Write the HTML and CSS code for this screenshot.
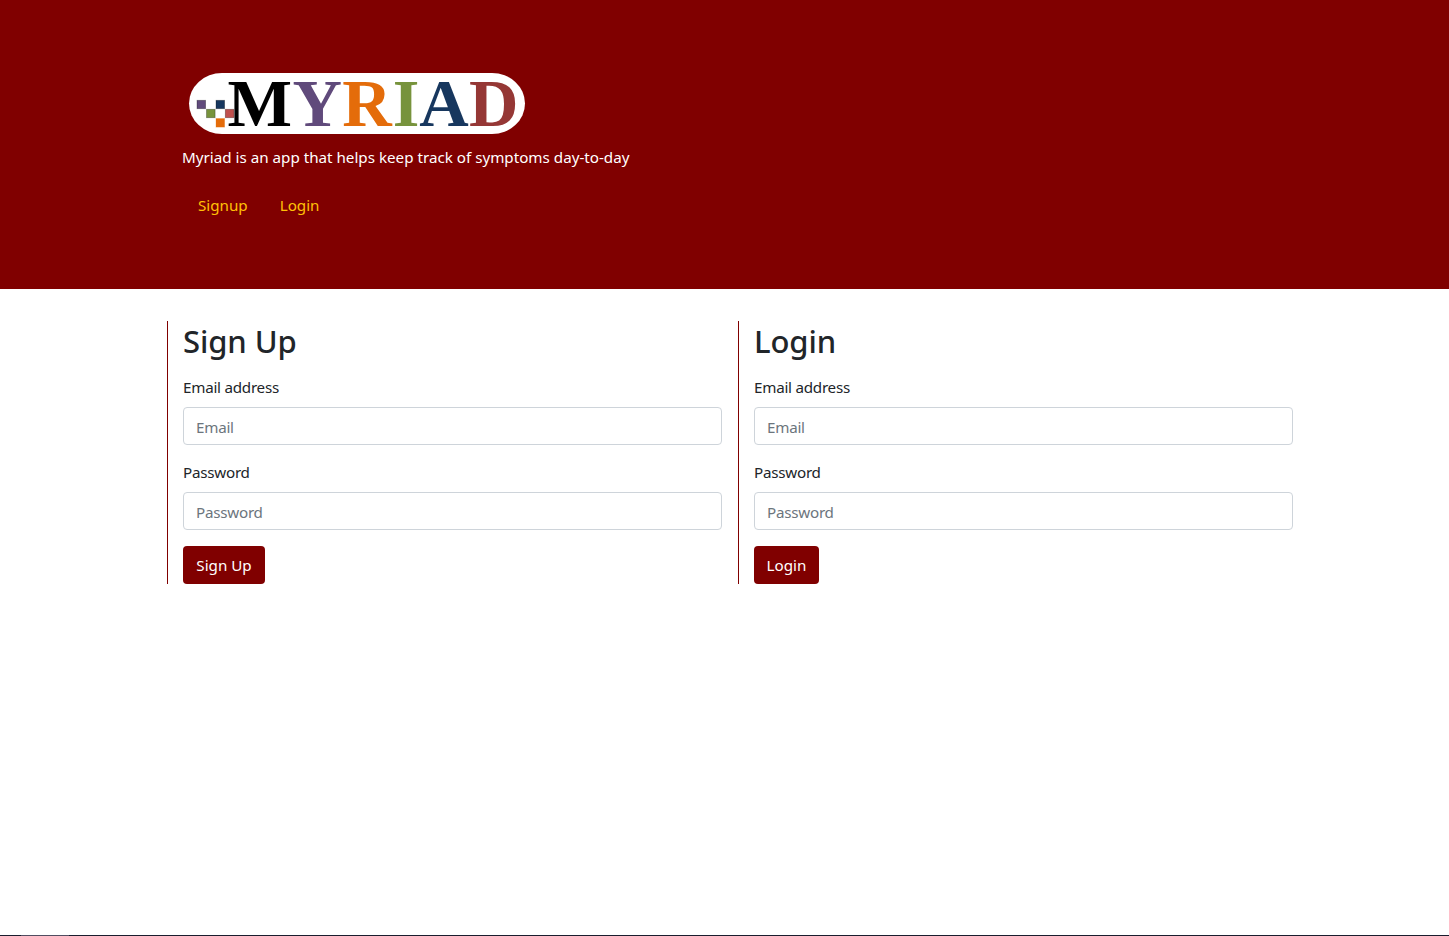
FILE: index.html
```html
<!DOCTYPE html>
<html lang="en">
<head>
<meta charset="utf-8">
<title>Myriad</title>
<link rel="stylesheet" href="styles.css">
</head>
<body>
<header class="hero">
  <svg class="logo" width="336" height="61" viewBox="189 73 336 61" role="img" aria-label="Myriad">
    <rect x="189" y="73" width="336" height="61" rx="33" ry="30.5" fill="#fff"/>
    <g stroke-opacity=".35" stroke="#000" stroke-width=".8">
      <rect x="197" y="100.3" width="8.6" height="8.4" fill="#604a7b"/>
      <rect x="216" y="100.3" width="8.6" height="8.4" fill="#17375e"/>
      <rect x="206.5" y="109.3" width="8.6" height="8.4" fill="#77933c"/>
      <rect x="225.3" y="109.3" width="8.6" height="8.4" fill="#c0504d"/>
      <rect x="216" y="118.5" width="8.6" height="8.6" fill="#e46c0a" stroke="#e46c0a"/>
    </g>
    <g class="logo-text">
      <text x="227.5" y="126" textLength="64.5" lengthAdjust="spacingAndGlyphs" fill="#000">M</text>
      <text x="292.5" y="126" fill="#604a7b">Y</text>
      <text x="342.2" y="126" fill="#e46c0a">R</text>
      <text x="392.7" y="126" fill="#77933c">I</text>
      <text x="419.3" y="126" fill="#17375e">A</text>
      <text x="469" y="126" fill="#953735">D</text>
    </g>
  </svg>
  <p class="tagline">Myriad is an app that helps keep track of symptoms day-to-day</p>
  <nav class="nav"><a>Signup</a><a>Login</a></nav>
</header>
<main class="forms">
  <form class="panel">
    <h2>Sign Up</h2>
    <label>Email address</label>
    <input type="email" placeholder="Email">
    <label>Password</label>
    <input type="password" placeholder="Password">
    <button class="b-signup" type="button">Sign Up</button>
  </form>
  <form class="panel">
    <h2>Login</h2>
    <label>Email address</label>
    <input type="email" placeholder="Email">
    <label>Password</label>
    <input type="password" placeholder="Password">
    <button class="b-login" type="button">Login</button>
  </form>
</main>
<footer class="edge"><span></span></footer>
</body>
</html>
```
FILE: styles.css
```css
* { box-sizing: border-box; }
body {
  margin: 0;
  height: 936px;
  display: flex;
  flex-direction: column;
  background: #fff;
  color: #212529;
  font: 15.2px/24px "Noto Sans", "Open Sans", sans-serif;
  letter-spacing: -.25px;
}
.hero {
  height: 289px;
  padding: 73px 182px 0;
  background: #800000;
  color: #fff;
}
.logo { display: block; margin-left: 7px; overflow: visible; }
.logo-text { font: bold 68.5px "Liberation Serif", serif; letter-spacing: 0; }
.tagline { margin: 11px 0 0; letter-spacing: 0; }
.nav { display: flex; gap: 32px; margin: 24px 0 0 16px; color: #ffc107; letter-spacing: 0; }
.forms {
  display: flex;
  width: 1142px;
  margin: 32px 0 0 167px;
}
.panel {
  flex: 1;
  height: 263px;
  padding: 0 16px 0 15px;
  border-left: 1px solid #800000;
}
h2 {
  margin: 1px 0 15px;
  font-size: 31px;
  font-weight: 500;
  line-height: 38px;
  letter-spacing: -.1px;
}
label { display: block; height: 24px; margin-bottom: 8px; }
input {
  display: block;
  width: 100%;
  height: 38px;
  margin-bottom: 16px;
  padding: 2px 12px 0;
  border: 1px solid #ced4da;
  border-radius: 4px;
  background: #fff;
  font: inherit;
  letter-spacing: inherit;
}
input + label { margin-top: -1px; }
input::placeholder { color: #6c757d; opacity: 1; }
button {
  display: block;
  height: 38px;
  padding: 0 0 1px;
  border: 0;
  border-radius: 4px;
  background: #800000;
  color: #fff;
  font: inherit;
  letter-spacing: 0;
}
.b-signup { width: 82px; }
.b-login { width: 65px; }
.edge { height: 1px; margin-top: auto; background: #1a1d2e; }
.edge span { display: block; width: 48px; height: 1px; margin-left: 21px; background: #514d61; }
```
